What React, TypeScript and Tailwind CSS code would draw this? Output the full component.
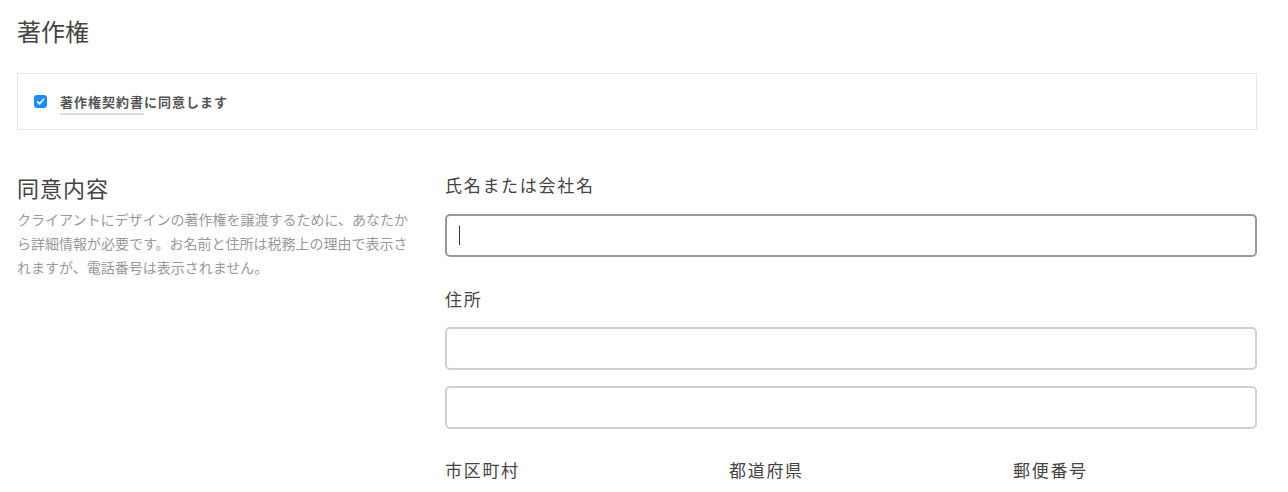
import * as React from "react";

const font = {
	fontFamily: '"Noto Sans CJK JP", "Noto Sans", sans-serif',
};

function CheckIcon() {
	return (
		<span className="flex h-[13px] w-[13px] items-center justify-center rounded-[3px] bg-[#1a8cff]">
			<svg viewBox="0 0 13 13" className="h-[13px] w-[13px]">
				<path
					d="M3.4 6.8 L5.5 8.9 L9.6 4.2"
					fill="none"
					stroke="#fff"
					strokeWidth="1.6"
					strokeLinecap="round"
					strokeLinejoin="round"
				/>
			</svg>
		</span>
	);
}

function Field({ focused }: { focused?: boolean }) {
	return (
		<div
			className={`flex h-[43px] w-full items-center rounded-[5px] border-2 bg-white px-3 ${
				focused ? "border-[#999999]" : "border-[#d0d0d0]"
			}`}
		>
			{focused && <span className="h-[19px] w-px bg-[#333]" />}
		</div>
	);
}

export default function App() {
	return (
		<div className="min-h-screen bg-white text-[#444]" style={font}>
			<div className="w-[1257px] pl-[17px] pt-[14px]">
				<h1 className="text-[24px] leading-[34px] font-normal text-[#444]">著作権</h1>

				<div className="mt-[25px] flex h-[57px] items-center gap-[13px] border border-[#e6e6e6] pl-[16px]">
					<CheckIcon />
					<span className="text-[13px] leading-[18px] tracking-[1px] font-bold text-[#555]">
						<span className="border-b-2 border-[#dddddd] pb-[2px]">著作権契約書</span>
						に同意します
					</span>
				</div>

				<div className="mt-[42px] grid grid-cols-[396px_1fr] gap-[32px]">
					<div>
						<h2 className="-mt-[2px] text-[22px] leading-[34px] tracking-[1px] text-[#444]">同意内容</h2>
						<p className="mt-[3px] text-[14px] leading-[24px] text-[#999]">
							クライアントにデザインの著作権を譲渡するために、あなたから詳細情報が必要です。お名前と住所は税務上の理由で表示されますが、電話番号は表示されません。
						</p>
					</div>

					<div>
						<label className="block pt-[1px] text-[17px] leading-[24px] tracking-[1.7px] text-[#444]">
							氏名または会社名
						</label>
						<div className="mt-[17px]">
							<Field focused />
						</div>

						<label className="mt-[30px] block text-[17px] leading-[24px] tracking-[1.7px] text-[#444]">
							住所
						</label>
						<div className="mt-[16px] flex flex-col gap-[16px]">
							<Field />
							<Field />
						</div>

						<div className="mt-[29px] grid grid-cols-3 gap-[40px]">
							<label className="text-[17px] leading-[24px] tracking-[1.7px] text-[#444]">市区町村</label>
							<label className="text-[17px] leading-[24px] tracking-[1.7px] text-[#444]">都道府県</label>
							<label className="text-[17px] leading-[24px] tracking-[1.7px] text-[#444]">郵便番号</label>
						</div>
					</div>
				</div>
			</div>
		</div>
	);
}
